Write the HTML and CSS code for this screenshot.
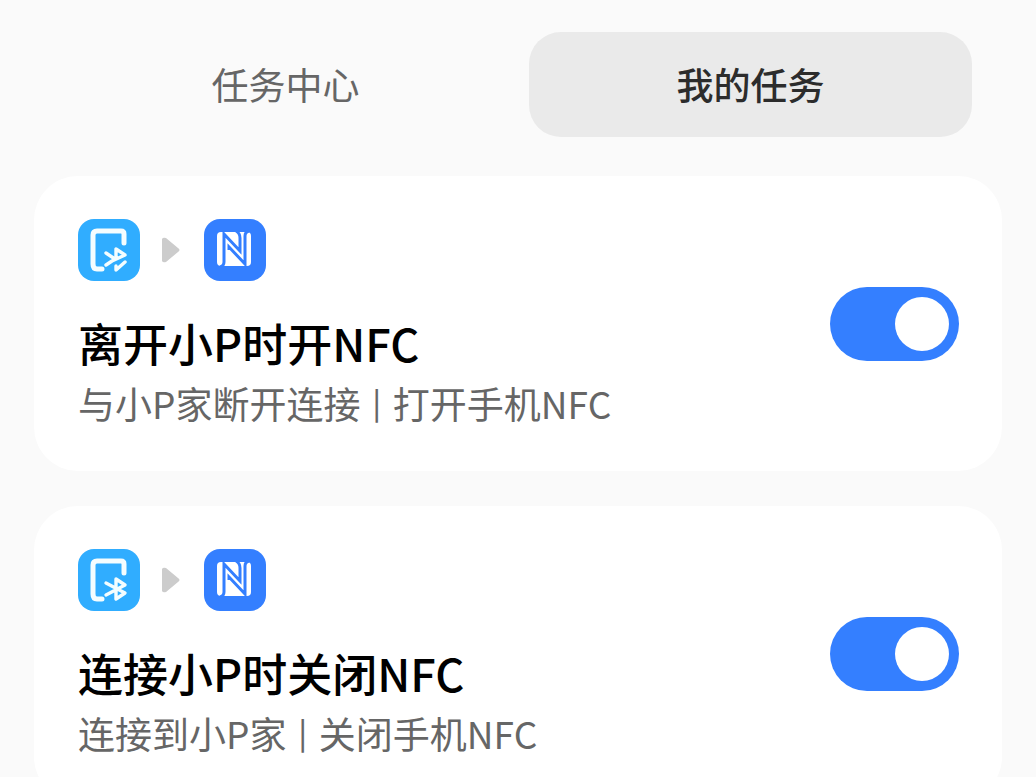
FILE: index.html
```html
<!DOCTYPE html>
<html lang="zh-CN">
<head>
  <meta charset="UTF-8">
  <meta name="viewport" content="width=device-width, initial-scale=1.0">
  <title>我的任务</title>
  <link rel="stylesheet" href="styles.css">
</head>
<body>
  <nav class="tabs">
    <button type="button" class="tab">任务中心</button>
    <button type="button" class="tab active">我的任务</button>
  </nav>

  <main class="task-list">
    <section class="card">
      <div class="info">
        <div class="flow">
          <!-- bluetooth disconnected -->
          <svg class="icon" viewBox="0 0 62 62" fill="none" aria-hidden="true">
            <rect width="62" height="62" rx="16" fill="#30adff"/>
            <g stroke="#f4fdff" stroke-linecap="round" stroke-linejoin="round">
              <path stroke-width="5" d="M46 24V15Q46 12 43 12H19Q15 12 15 16V45Q15 50 19 50H24"/>
              <path stroke-width="3.4" d="M28 34L37 40L28 46M34 42L47 36L38 30V40M38 47V51L47 43"/>
            </g>
          </svg>
          <svg class="arrow" viewBox="0 0 18 26" aria-hidden="true">
            <path fill="#ccc" d="M0 2Q1 0 4 1L16 11Q19 13 16 15L4 25Q1 26 0 24Z"/>
          </svg>
          <svg class="icon" viewBox="0 0 62 62" fill="none" aria-hidden="true">
            <rect width="62" height="62" rx="16" fill="#347fff"/>
            <rect x="13" y="13" width="34" height="34" rx="4" fill="#fff"/>
            <path stroke="#347fff" stroke-width="3" d="M16 48Q20 47 20 43V15L36 32V19Q36 14 32 12M45 12Q41 13 41 17V45L25 28V31"/>
          </svg>
        </div>
        <h2 class="title">离开小P时开NFC</h2>
        <p class="desc">与小P家断开连接<span class="divider">|</span>打开手机NFC</p>
      </div>
      <input type="checkbox" role="switch" class="switch" aria-label="离开小P时开NFC" checked>
    </section>

    <section class="card">
      <div class="info">
        <div class="flow">
          <!-- bluetooth connected -->
          <svg class="icon" viewBox="0 0 62 62" fill="none" aria-hidden="true">
            <rect width="62" height="62" rx="16" fill="#30adff"/>
            <g stroke="#f4fdff" stroke-linecap="round" stroke-linejoin="round">
              <path stroke-width="5" d="M46 24V15Q46 12 43 12H19Q15 12 15 16V45Q15 50 19 50H24"/>
              <path stroke-width="3.4" d="M28 34L47 44L38 50V30L47 36L28 46"/>
            </g>
          </svg>
          <svg class="arrow" viewBox="0 0 18 26" aria-hidden="true">
            <path fill="#ccc" d="M0 2Q1 0 4 1L16 11Q19 13 16 15L4 25Q1 26 0 24Z"/>
          </svg>
          <svg class="icon" viewBox="0 0 62 62" fill="none" aria-hidden="true">
            <rect width="62" height="62" rx="16" fill="#347fff"/>
            <rect x="13" y="13" width="34" height="34" rx="4" fill="#fff"/>
            <path stroke="#347fff" stroke-width="3" d="M16 48Q20 47 20 43V15L36 32V19Q36 14 32 12M45 12Q41 13 41 17V45L25 28V31"/>
          </svg>
        </div>
        <h2 class="title">连接小P时关闭NFC</h2>
        <p class="desc">连接到小P家<span class="divider">|</span>关闭手机NFC</p>
      </div>
      <input type="checkbox" role="switch" class="switch" aria-label="连接小P时关闭NFC" checked>
    </section>
  </main>
</body>
</html>
```

FILE: styles.css
```css
* {
  box-sizing: border-box;
}

body {
  margin: 0;
  background-color: #fafafa;
  font-family: "Noto Sans CJK SC", sans-serif;
}

.tabs {
  display: flex;
  gap: 22px;
  padding: 32px 64px 39px;
}

.tab {
  flex: 1;
  height: 105px;
  padding: 0 0 2px;
  border: none;
  border-radius: 32px;
  background-color: transparent;
  color: #666;
  font-family: inherit;
  font-size: 37px;
  cursor: pointer;
}

.tab.active {
  background-color: #eaeaea;
  color: #2c2c2c;
  font-weight: 500;
}

.task-list {
  display: flex;
  flex-direction: column;
  gap: 35px;
  padding: 0 34px 35px;
}

.card {
  display: flex;
  align-items: center;
  justify-content: space-between;
  padding: 43px 43px 43px 44px;
  border-radius: 44px;
  background-color: #fff;
}

.flow {
  display: flex;
  align-items: center;
  margin-bottom: 32px;
}

.icon {
  width: 62px;
  height: 62px;
}

.arrow {
  width: 18px;
  height: 26px;
  margin: 0 24px 0 22px;
}

.title {
  margin: 0 0 5px;
  color: #000;
  font-size: 45px;
  font-weight: 500;
  line-height: 60px;
}

.desc {
  display: flex;
  align-items: center;
  margin: 0;
  color: #666;
  font-size: 37px;
  line-height: 50px;
}

.divider {
  margin: 0 12px;
  padding-bottom: 4px;
  font-size: 30px;
  font-weight: 500;
  line-height: 40px;
}

.switch {
  appearance: none;
  display: flex;
  flex-shrink: 0;
  align-items: center;
  width: 129px;
  height: 74px;
  margin: 0;
  padding: 0 10px;
  border-radius: 37px;
  background-color: #d9d9d9;
  cursor: pointer;
}

.switch::before {
  content: "";
  width: 54px;
  height: 54px;
  border-radius: 50%;
  background-color: #fff;
}

.switch:checked {
  justify-content: flex-end;
  background-color: #347fff;
}
```
